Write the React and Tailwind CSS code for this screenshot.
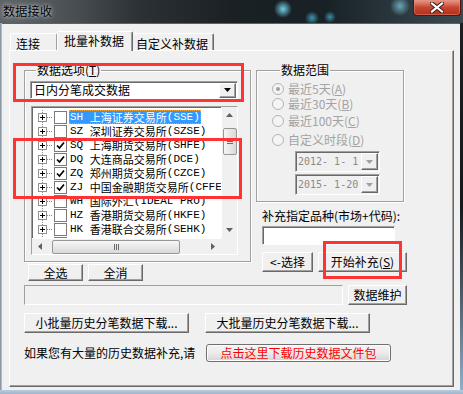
import React from "react";

const rows = [
  ["SH", "上海证券交易所", "(SSE)", false, true],
  ["SZ", "深圳证券交易所", "(SZSE)", false],
  ["SQ", "上海期货交易所", "(SHFE)", true],
  ["DQ", "大连商品交易所", "(DCE)", true],
  ["ZQ", "郑州期货交易所", "(CZCE)", true],
  ["ZJ", "中国金融期货交易所", "(CFFEX)", true],
  ["WH", "国际外汇", "(IDEAL PRO)", false],
  ["HZ", "香港期货交易所", "(HKFE)", false],
  ["HK", "香港联合交易所", "(SEHK)", false],
  ["HG", "香港创业板", "(GEM)", false],
];

function Raised({ className = "", children }) {
  return (
    <div
      className={
        "flex items-center justify-center bg-[#f0f0f0] border border-t-white border-l-white border-r-[#696969] border-b-[#696969] shadow-[inset_-1px_-1px_0_#a0a0a0] " +
        className
      }
    >
      {children}
    </div>
  );
}

function Sunken({ className = "", children }) {
  return (
    <div
      className={
        "border border-t-[#a0a0a0] border-l-[#a0a0a0] border-r-white border-b-white shadow-[inset_1px_1px_0_#696969] " +
        className
      }
    >
      {children}
    </div>
  );
}

function Down({ color = "#000" }) {
  return (
    <svg width="7" height="4" viewBox="0 0 7 4">
      <polygon points="0,0 7,0 3.5,4" fill={color} />
    </svg>
  );
}

function Mono({ children }) {
  return (
    <span className="[font-family:'Liberation_Mono',monospace] text-[11px] whitespace-pre">{children}</span>
  );
}

function Row({ code, name, tail, checked, selected }) {
  return (
    <div className="flex items-center h-[14px] whitespace-nowrap">
      <div className="flex items-center w-[21px] h-[14px] shrink-0 bg-[repeating-linear-gradient(to_bottom,#8a8a8a_0_1px,transparent_1px_2px)] bg-[length:1px_100%] bg-[position:10px_0] bg-no-repeat">
        <div className="ml-[6px] w-[9px] h-[9px] border border-[#919191] bg-white flex items-center justify-center">
          <svg width="5" height="5" viewBox="0 0 5 5">
            <rect x="0" y="2" width="5" height="1" fill="#000" />
            <rect x="2" y="0" width="1" height="5" fill="#000" />
          </svg>
        </div>
        <div className="w-[6px] h-px bg-[repeating-linear-gradient(to_right,#8a8a8a_0_1px,transparent_1px_2px)]" />
      </div>
      <div className="ml-[1px] w-[13px] h-[13px] shrink-0 border border-[#7a7a7a] bg-white flex items-center justify-center">
        {checked && (
          <svg width="9" height="9" viewBox="0 0 9 9">
            <path d="M1 4.5 L3.5 7 L8 1.5" stroke="#000" strokeWidth="1.7" fill="none" />
          </svg>
        )}
      </div>
      <div
        className={
          selected
            ? "ml-[2px] px-[1px] h-[14px] flex items-center text-[11px] leading-[14px] bg-[#3399ff] text-white outline outline-1 outline-dotted outline-[#f0a030] -outline-offset-1"
            : "ml-[2px] px-[1px] h-[14px] flex items-center text-[11px] leading-[14px] text-black"
        }
      >
        <Mono>{code + " "}</Mono>
        <span>{name}</span>
        <Mono>{tail}</Mono>
      </div>
    </div>
  );
}

function Radio({ checked, children }) {
  return (
    <div className="flex items-center h-[14px] text-[#a3a3a3]">
      <div className="w-[12px] h-[12px] rounded-full border border-[#b4b4b4] bg-[#f4f4f4] flex items-center justify-center">
        {checked && <div className="w-[4px] h-[4px] rounded-full bg-[#a0a0a0]" />}
      </div>
      <span className="ml-[4px]">{children}</span>
    </div>
  );
}

function DateBox({ value, className = "" }) {
  return (
    <Sunken className={"ml-[23px] w-[85px] h-[21px] bg-[#f0f0f0] flex items-center justify-between pl-[2px] pr-[1px] " + className}>
      <span className="[font-family:'DejaVu_Sans_Mono',monospace] text-[10px] whitespace-pre text-[#8a8a8a]">{value}</span>
      <Raised className="w-[17px] h-[17px]">
        <Down color="#a0a0a0" />
      </Raised>
    </Sunken>
  );
}

export default function App() {
  return (
    <div className="relative w-[463px] h-[394px] overflow-hidden flex flex-col bg-[#a9bfd5] text-[12px] leading-[14px] [font-family:'Noto_Sans_CJK_SC',sans-serif] text-black">
      {/* title bar */}
      <div className="h-[23px] shrink-0 flex items-start justify-between bg-[radial-gradient(circle_at_283px_9px,#6fd0e6_0,transparent_9px),radial-gradient(circle_at_312px_18px,#3c95ad_0,transparent_7px),radial-gradient(circle_at_330px_17px,#3a8ea6_0,transparent_6px),radial-gradient(circle_at_400px_6px,#6aa6b8_0,transparent_10px),linear-gradient(to_right,#5d6468,#4a5054_15%,#2b3135_30%,#1a2024_50%,#182126_70%,#2a363d_85%,#3b4a52_100%)]">
        <span className="ml-[3px] mt-[4px] text-[12px] tracking-[0.3px] text-black [text-shadow:0_0_6px_#ffffffb0,0_0_3px_#ffffff90]">数据接收</span>
        <div className="mr-[2px] w-[48px] h-[16px] rounded-b-[4px] border border-t-0 border-[#4a1812] bg-gradient-to-b from-[#e39a8c] via-[#c8442e] to-[#b3301b] shadow-[inset_0_0_0_1px_#e98b7a80] flex items-center justify-center">
          <svg width="14" height="11" viewBox="0 0 14 11">
            <path d="M2 1.5 L12 9.5 M12 1.5 L2 9.5" stroke="#3a1510" strokeWidth="4" strokeLinecap="square" />
            <path d="M2 1.5 L12 9.5 M12 1.5 L2 9.5" stroke="#ffffff" strokeWidth="2.2" strokeLinecap="square" />
          </svg>
        </div>
      </div>

      <div className="flex h-[367px] shrink-0">
        <div className="w-[2px] bg-gradient-to-r from-[#7d8b96] to-[#b9cadb]" />
        {/* client area */}
        <div className="w-[458px] bg-[#f0f0f0] border-t border-[#5a636a] pt-[7px] pl-[7px]">
          {/* tabs */}
          <div className="flex items-end h-[19px]">
            <div className="ml-[1px] w-[47px] h-[17px] border border-b-0 border-t-white border-l-white border-r-[#a0a0a0] rounded-t-[2px] pl-[5px] pt-[3px]">连接</div>
            <div className="relative z-10 -mb-[1px] w-[76px] h-[20px] bg-[#f0f0f0] border border-b-0 border-t-white border-l-white border-r-[#696969] rounded-t-[2px] pl-[6px] pt-[2px] shadow-[inset_-1px_0_0_#a0a0a0]">批量补数据</div>
            <div className="w-[81px] h-[17px] border border-b-0 border-l-0 border-t-white border-r-[#696969] rounded-t-[2px] pl-[3px] pt-[3px] shadow-[inset_-1px_0_0_#a0a0a0]">自定义补数据</div>
          </div>

          {/* tab page */}
          <div className="w-[445px] h-[337px] border border-t-white border-l-white border-r-[#696969] border-b-[#696969] shadow-[inset_-1px_-1px_0_#a0a0a0] pt-[12px] pl-[14px]">
            <div className="flex items-start gap-[5px]">
              {/* left column */}
              <div className="w-[227px]">
                <fieldset className="w-[227px] border border-[#a0a0a0] shadow-[inset_1px_1px_0_#fff,1px_1px_0_#fff] pl-[5px] pb-[6px]">
                  <legend className="ml-[6px] px-[1px] leading-[14px]">
                    数据选项(<u>T</u>)
                  </legend>
                  <Sunken className="mt-[4px] w-[208px] h-[18px] bg-white flex items-center justify-between pl-[3px] pr-[1px]">
                    <span>日内分笔成交数据</span>
                    <Raised className="w-[17px] h-[15px]">
                      <Down />
                    </Raised>
                  </Sunken>
                  <Sunken className="ml-[1px] mt-[7px] w-[207px] h-[149px] bg-white flex flex-col">
                    <div className="flex flex-1 min-h-0">
                      <div className="flex-1 min-w-0 overflow-hidden pt-[3px]">
                        {rows.map((r) => (
                          <Row key={r[0]} code={r[0]} name={r[1]} tail={r[2]} checked={r[3]} selected={r[4]} />
                        ))}
                      </div>
                      {/* vertical scrollbar */}
                      <div className="w-[16px] shrink-0 bg-[#f0f0f0] border-l border-white flex flex-col items-center">
                        <div className="h-[16px] flex items-center justify-center">
                          <svg width="7" height="4" viewBox="0 0 7 4">
                            <polygon points="0,4 7,4 3.5,0" fill="#606060" />
                          </svg>
                        </div>
                        <div className="mt-[5px] w-[14px] h-[27px] rounded-[2px] border border-[#979797] bg-gradient-to-r from-[#f6f6f6] to-[#d9d9d9] flex flex-col items-center justify-center gap-[1px]">
                          <div className="w-[6px] h-px bg-[#6a6a6a]" />
                          <div className="w-[6px] h-px bg-[#6a6a6a]" />
                          <div className="w-[6px] h-px bg-[#6a6a6a]" />
                        </div>
                        <div className="flex-1" />
                        <div className="h-[16px] flex items-center justify-center">
                          <Down color="#606060" />
                        </div>
                      </div>
                    </div>
                    {/* horizontal scrollbar */}
                    <div className="flex h-[16px] shrink-0">
                      <div className="flex-1 bg-[#f0f0f0] border-t border-white flex items-center">
                        <div className="w-[16px] flex items-center justify-center">
                          <svg width="4" height="7" viewBox="0 0 4 7">
                            <polygon points="4,0 4,7 0,3.5" fill="#606060" />
                          </svg>
                        </div>
                        <div className="ml-[4px] w-[128px] h-[14px] rounded-[2px] border border-[#979797] bg-gradient-to-b from-[#f6f6f6] to-[#d9d9d9] flex items-center justify-center gap-[1px]">
                          <div className="w-px h-[6px] bg-[#6a6a6a]" />
                          <div className="w-px h-[6px] bg-[#6a6a6a]" />
                          <div className="w-px h-[6px] bg-[#6a6a6a]" />
                        </div>
                        <div className="flex-1" />
                        <div className="w-[16px] flex items-center justify-center">
                          <svg width="4" height="7" viewBox="0 0 4 7">
                            <polygon points="0,0 0,7 4,3.5" fill="#606060" />
                          </svg>
                        </div>
                      </div>
                      <div className="w-[16px] bg-[#f0f0f0]" />
                    </div>
                  </Sunken>
                </fieldset>
                <div className="mt-[2px] ml-[4px] flex gap-[5px]">
                  <Raised className="w-[55px] h-[17px]">全选</Raised>
                  <Raised className="w-[55px] h-[17px]">全消</Raised>
                </div>
              </div>

              {/* right column */}
              <div className="w-[151px]">
                <fieldset className="w-[148px] border border-[#a0a0a0] shadow-[inset_1px_1px_0_#fff,1px_1px_0_#fff] pl-[15px] pb-[6px]">
                  <legend className="ml-[8px] px-[1px] leading-[14px]">数据范围</legend>
                  <div className="mt-[5px]">
                    <Radio checked>
                      最近5天(<u>A</u>)
                    </Radio>
                  </div>
                  <div className="mt-[1px]">
                    <Radio>
                      最近30天(<u>B</u>)
                    </Radio>
                  </div>
                  <div className="mt-[3px]">
                    <Radio>
                      最近100天(<u>C</u>)
                    </Radio>
                  </div>
                  <div className="mt-[5px]">
                    <Radio>
                      自定义时段(<u>D</u>)
                    </Radio>
                  </div>
                  <DateBox value="2012- 1- 1" className="mt-[4px]" />
                  <DateBox value="2015- 1-20" className="mt-[2px]" />
                </fieldset>
                <div className="mt-[7px] ml-[6px] whitespace-nowrap">补充指定品种(市场+代码):</div>
                <Sunken className="mt-[3px] ml-[6px] w-[133px] h-[19px] bg-white" />
                <div className="mt-[7px] ml-[6px] flex gap-[5px]">
                  <Raised className="w-[51px] h-[20px]">&lt;-选择</Raised>
                  <Raised className="w-[89px] h-[20px]">
                    开始补充(<u>S</u>)
                  </Raised>
                </div>
              </div>
            </div>

            <div className="mt-[4px] flex gap-[5px]">
              <div className="w-[319px] h-[20px] border border-t-[#a0a0a0] border-l-[#a0a0a0] border-r-white border-b-white bg-[#f0f0f0]" />
              <Raised className="w-[59px] h-[20px]">数据维护</Raised>
            </div>

            <div className="mt-[8px] flex gap-[16px]">
              <Raised className="w-[165px] h-[20px]">小批量历史分笔数据下载...</Raised>
              <Raised className="w-[165px] h-[20px]">大批量历史分笔数据下载...</Raised>
            </div>

            <div className="mt-[11px] flex items-center">
              <span className="w-[182px] whitespace-nowrap">如果您有大量的历史数据补充,请</span>
              <div className="w-[185px] h-[18px] rounded-[3px] border border-[#707070] bg-gradient-to-b from-[#f4f4f4] via-[#ebebeb] to-[#d5d5d5] shadow-[inset_0_0_0_1px_#fcfcfc] flex items-center justify-center text-[#ff0000]">
                点击这里下载历史数据文件包
              </div>
            </div>
          </div>
        </div>
        <div className="w-[3px] bg-gradient-to-b from-[#1b1f22] via-[#15191c] to-[#8fb0cc]" />
      </div>
      <div className="flex-1 bg-gradient-to-b from-[#b9cde0] to-[#9cb5cc]" />

      {/* red annotation boxes */}
      <div className="pointer-events-none absolute left-[13px] top-[63px] w-[231px] h-[39px] border-[3px] border-[#ff3333]" />
      <div className="pointer-events-none absolute left-[13px] top-[138px] w-[229px] h-[61px] border-[3px] border-[#ff3333]" />
      <div className="pointer-events-none absolute left-[323px] top-[241px] w-[79px] h-[38px] border-[3px] border-[#ff3333]" />
    </div>
  );
}
